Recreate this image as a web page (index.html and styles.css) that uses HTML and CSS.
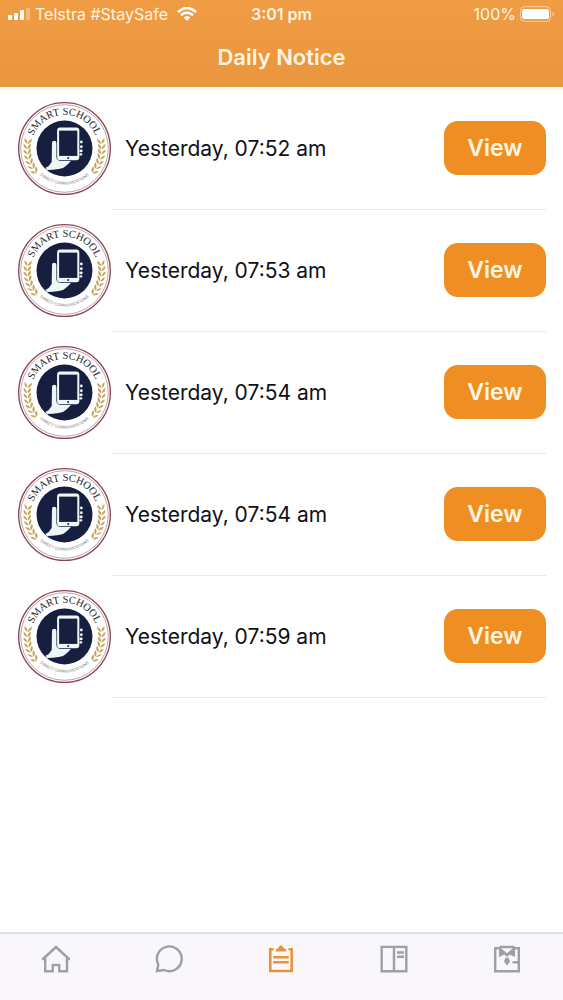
FILE: index.html
```html
<!DOCTYPE html>
<html lang="en">
<head>
    <meta charset="UTF-8">
    <meta name="viewport" content="width=device-width, initial-scale=1.0">
    <title>Daily Notice</title>
    <link rel="stylesheet" href="styles.css">
</head>

<body>
    <!-- Shared school badge, reused by every notice -->
    <svg class="defs" width="0" height="0" aria-hidden="true">
        <defs>
            <path id="arc-top" d="M38 138 A100 100 0 0 1 238 138"/>
            <path id="arc-bottom" d="M31 138 A107 107 0 0 0 245 138"/>
            <g id="leaf">
                <path d="M27 146 Q16 142 16 131 Q26 134 27 146Z"/>
                <path d="M28 146 Q28 134 38 129 Q40 141 28 146Z"/>
            </g>
            <g id="branch" fill="#c3a45c">
                <use href="#leaf" transform="rotate(11 138 138)"/>
                <use href="#leaf" transform="rotate(3 138 138)"/>
                <use href="#leaf" transform="rotate(-5 138 138)"/>
                <use href="#leaf" transform="rotate(-13 138 138)"/>
                <use href="#leaf" transform="rotate(-21 138 138)"/>
                <use href="#leaf" transform="rotate(-29 138 138)"/>
                <use href="#leaf" transform="rotate(-37 138 138)"/>
            </g>
            <symbol id="badge" viewBox="0 0 276 276">
                <circle cx="138" cy="138" r="136" fill="#fff" stroke="#8a4655" stroke-width="4"/>
                <circle cx="138" cy="138" r="130" fill="none" stroke="#a77680" stroke-width="2"/>
                <circle cx="138" cy="138" r="83" fill="#171f40"/>
                <use href="#branch"/>
                <use href="#branch" transform="translate(276 0) scale(-1 1)"/>
                <path d="M101 122 Q101 115 107 115 Q114 115 114 122 V165 Q116 175 128 175 H157 Q149 184 142 190 Q135 198 121 199 Q103 202 86 202 L81 196 Q94 190 100 178Z" fill="#eef6f8"/>
                <rect x="116" y="76" width="66" height="97" rx="9" fill="#eef6f8"/>
                <rect x="122" y="85" width="54" height="75" fill="#171f40"/>
                <circle cx="149" cy="166" r="3" fill="#171f40"/>
                <g fill="#eef6f8">
                    <rect x="184" y="114" width="8" height="9" rx="4"/>
                    <rect x="184" y="128" width="8" height="9" rx="4"/>
                    <rect x="182" y="141" width="10" height="8" rx="4"/>
                    <rect x="182" y="152" width="9" height="7" rx="3"/>
                </g>
                <text class="badge-name"><textPath href="#arc-top" startOffset="50%">SMART SCHOOL</textPath></text>
                <text class="badge-motto"><textPath href="#arc-bottom" startOffset="50%">DIRECT COMMUNICATIONS</textPath></text>
            </symbol>
        </defs>
    </svg>

    <header class="header">
        <div class="status">
            <div class="status-left">
                <svg class="signal" viewBox="0 0 22 12" width="22" height="12" fill="#fff" aria-hidden="true">
                    <rect x="0" y="7" width="4" height="5" rx="1"/>
                    <rect x="6" y="5" width="4" height="7" rx="1"/>
                    <rect x="12" y="2" width="4" height="10" rx="1"/>
                    <rect x="18" y="0" width="4" height="12" rx="1" opacity="0.3"/>
                </svg>
                <span>Telstra #StaySafe</span>
                <svg class="wifi" viewBox="0 0 20 14" width="20" height="14" fill="none" stroke="#fff" aria-hidden="true">
                    <path d="M1 5 Q10 -3 19 5" stroke-width="2.6"/>
                    <path d="M4 8.3 Q10 3 16 8.3" stroke-width="2.5"/>
                    <path d="M6.7 10.5 Q10 7.5 13.3 10.5 L10 14Z" fill="#fff" stroke="none"/>
                </svg>
            </div>
            <span class="time">3:01 pm</span>
            <div class="status-right">
                <span>100%</span>
                <svg viewBox="0 0 35 16" width="35" height="16" aria-hidden="true">
                    <rect x="0.5" y="0.7" width="30" height="14.6" rx="4" fill="none" stroke="#fff" opacity="0.5"/>
                    <rect x="2" y="3" width="27" height="10" rx="2" fill="#fff"/>
                    <path d="M32.5 5.5 Q36 8 32.5 10.5Z" fill="#fff" opacity="0.5"/>
                </svg>
            </div>
        </div>
        <h1 class="title">Daily Notice</h1>
    </header>

    <!-- Notices -->
    <main class="content">
        <ul class="notices">
            <li class="notice">
                <svg class="logo" role="img" aria-label="Smart School"><use href="#badge"/></svg>
                <div class="notice-body">
                    <span class="date">Yesterday, 07:52 am</span>
                    <button type="button" class="view">View</button>
                </div>
            </li>
            <li class="notice">
                <svg class="logo" role="img" aria-label="Smart School"><use href="#badge"/></svg>
                <div class="notice-body">
                    <span class="date">Yesterday, 07:53 am</span>
                    <button type="button" class="view">View</button>
                </div>
            </li>
            <li class="notice">
                <svg class="logo" role="img" aria-label="Smart School"><use href="#badge"/></svg>
                <div class="notice-body">
                    <span class="date">Yesterday, 07:54 am</span>
                    <button type="button" class="view">View</button>
                </div>
            </li>
            <li class="notice">
                <svg class="logo" role="img" aria-label="Smart School"><use href="#badge"/></svg>
                <div class="notice-body">
                    <span class="date">Yesterday, 07:54 am</span>
                    <button type="button" class="view">View</button>
                </div>
            </li>
            <li class="notice">
                <svg class="logo" role="img" aria-label="Smart School"><use href="#badge"/></svg>
                <div class="notice-body">
                    <span class="date">Yesterday, 07:59 am</span>
                    <button type="button" class="view">View</button>
                </div>
            </li>
        </ul>
    </main>

    <!-- Bottom tabs -->
    <nav class="tabs">
        <a href="#home" class="tab" aria-label="Home">
            <svg viewBox="0 0 28 28" width="28" height="28" fill="none" stroke="currentColor" stroke-width="2.4">
                <path d="M1 14 L14 2 L27 14 H25 V26.3 H17.3 V20 H10.7 V26.3 H3.2 V14Z"/>
            </svg>
        </a>
        <a href="#chat" class="tab" aria-label="Chat">
            <svg viewBox="0 0 28 28" width="28" height="28" fill="none" stroke="currentColor" stroke-width="2.4">
                <path d="M2 26 L3.3 19.5 A12.4 12.4 0 1 1 9 25Z"/>
            </svg>
        </a>
        <a href="#notices" class="tab active" aria-label="Notices">
            <svg viewBox="0 0 28 28" width="28" height="28" fill="none" stroke="currentColor" stroke-width="2.6">
                <path d="M6.5 4.3 H3.3 V26 H24.7 V4.3 H21.5"/>
                <path d="M6.2 12.2 H21.8 M6.2 17.2 H21.8"/>
                <path d="M9 6.5 V4.5 Q9 3.5 11 3.5 Q12 0.5 14 0.5 Q16 0.5 17 3.5 Q19 3.5 19 4.5 V6.5Z" fill="currentColor" stroke="none"/>
            </svg>
        </a>
        <a href="#newsletter" class="tab" aria-label="Newsletter">
            <svg viewBox="0 0 28 28" width="28" height="28" fill="none" stroke="currentColor" stroke-width="2.4">
                <path d="M1.7 1.9 H26.3 V26.3 H1.7Z M14 2 V26"/>
                <path d="M17 7.5 H24 M17 11.8 H24"/>
            </svg>
        </a>
        <a href="#uniform" class="tab" aria-label="Uniform">
            <svg viewBox="0 0 28 28" width="28" height="28" fill="none" stroke="currentColor" stroke-width="2.4">
                <path d="M6.5 3.2 H2.2 V26.3 H25.8 V3.2 H21.5"/>
                <path d="M6.5 2 H21.5"/>
                <path d="M6 1.5 L14 8.2 L22 1.5 V12 L16.5 9.5 L15 11.5 H13 L11.5 9.5 L6 12Z" fill="currentColor" stroke="none"/>
                <path d="M12.5 12.7 H15.5 L17 16.5 L14 20.5 L11 16.5Z" fill="currentColor" stroke="none"/>
                <path d="M19.5 17.3 H26"/>
            </svg>
        </a>
    </nav>
</body>
</html>
```

FILE: styles.css
```css
* {
    box-sizing: border-box;
}

body {
    display: flex;
    flex-direction: column;
    min-height: 100vh;
    margin: 0;
    background: #fff;
    color: #111114;
    font-family: Inter, "Liberation Sans", sans-serif;
}

.defs {
    position: absolute; /* Keep the definitions out of the flow */
}

/* Header */
.header {
    height: 87px;
    padding-top: 4px;
    background: linear-gradient(#f09c45, #e9963e);
    color: #fff4e2;
}

.status {
    display: grid;
    grid-template-columns: 1fr auto 1fr;
    align-items: center;
    height: 20px;
    padding: 0 8px;
    font-size: 16px;
}

.status-left,
.status-right {
    display: flex;
    align-items: center;
    gap: 5px;
}

.wifi {
    margin-left: 4px;
}

.status-right {
    justify-content: flex-end;
    gap: 4px;
}

.time {
    font-weight: 600;
}

.title {
    margin: 17px 0 0;
    font-size: 22px;
    font-weight: 600;
    line-height: 32px;
    text-align: center;
}

/* Notices */
.content {
    flex: 1;
}

.notices {
    margin: 0;
    padding: 1px 17px 0 18px;
    list-style: none;
}

.notice {
    display: flex;
    align-items: center;
    height: 122px;
}

.logo {
    flex: none;
    width: 93px;
    height: 93px;
    margin: 0 1px 2px 0;
}

.notice-body {
    display: flex;
    flex: 1;
    align-items: center;
    justify-content: space-between;
    height: 100%;
    padding: 0 0 1px 13px;
    border-bottom: 1px solid #e8e8ea;
}

.date {
    font-size: 21px;
}

.view {
    width: 102px;
    height: 54px;
    border: 0;
    border-radius: 14px;
    background: #ef8e23;
    color: #fff6e4;
    font-family: inherit;
    font-size: 23px;
    font-weight: 600;
    cursor: pointer;
}

.badge-name {
    fill: #26262e;
    font-family: "Liberation Serif", serif;
    font-size: 31px;
    text-anchor: middle;
}

.badge-motto {
    fill: #77777f;
    font-family: "Liberation Sans", sans-serif;
    font-size: 12px;
    text-anchor: middle;
}

/* Bottom tabs */
.tabs {
    display: flex;
    height: 68px;
    border-top: 2px solid #e2e0e4;
    background: #f9f7fb;
}

.tab {
    display: flex;
    flex: 1;
    justify-content: center;
    padding-top: 11px;
    color: #a09fa3;
}

.tab.active {
    color: #e8933a;
}
```
